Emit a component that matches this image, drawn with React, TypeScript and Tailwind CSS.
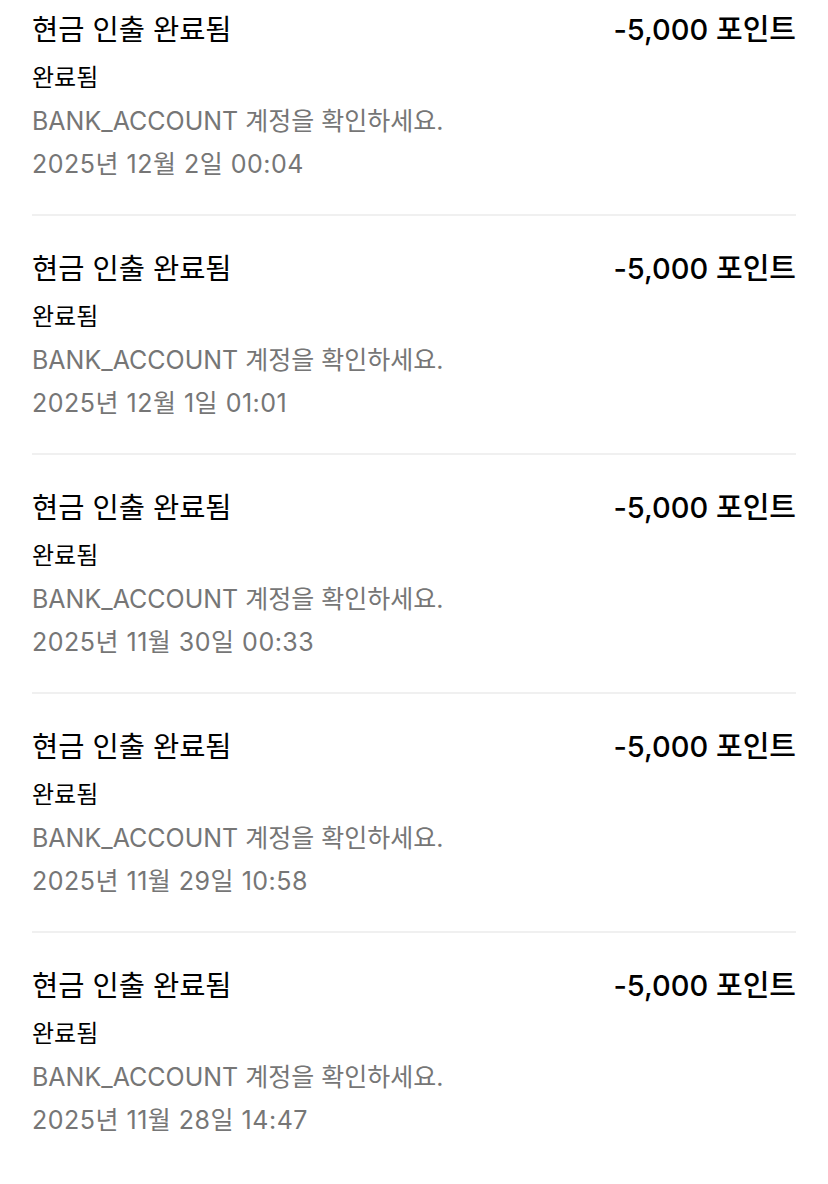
import React from "react";

const items = [
  "2025년 12월 2일 00:04",
  "2025년 12월 1일 01:01",
  "2025년 11월 30일 00:33",
  "2025년 11월 29일 10:58",
  "2025년 11월 28일 14:47",
];

export default function App() {
  return (
    <div
      className="w-[828px] min-h-[1184px] bg-white px-[32px]"
      style={{ fontFamily: '"Inter", "Noto Sans CJK KR", sans-serif' }}
    >
      {items.map((d, i) => (
        <div
          key={i}
          className={`${i === 0 ? "pt-[10px]" : "pt-[33px]"} pb-[33px] ${
            i < items.length - 1 ? "border-b-2 border-[#f0f0f0]" : ""
          }`}
        >
          <div className="flex justify-between items-center h-[40px] text-black">
            <span className="text-[28.5px] font-normal">현금 인출 완료됨</span>
            <span className="text-[29px] font-medium">-5,000 포인트</span>
          </div>
          <div className="mt-[12px] h-[32px] flex items-center text-[24px] text-black">완료됨</div>
          <div className="mt-[12px] h-[32px] flex items-center text-[25px] text-[#767676]">
            BANK_ACCOUNT 계정을 확인하세요.
          </div>
          <div className="mt-[11px] h-[32px] flex items-center text-[25px] tracking-[0.02em] text-[#767676]">
            {d}
          </div>
        </div>
      ))}
    </div>
  );
}
